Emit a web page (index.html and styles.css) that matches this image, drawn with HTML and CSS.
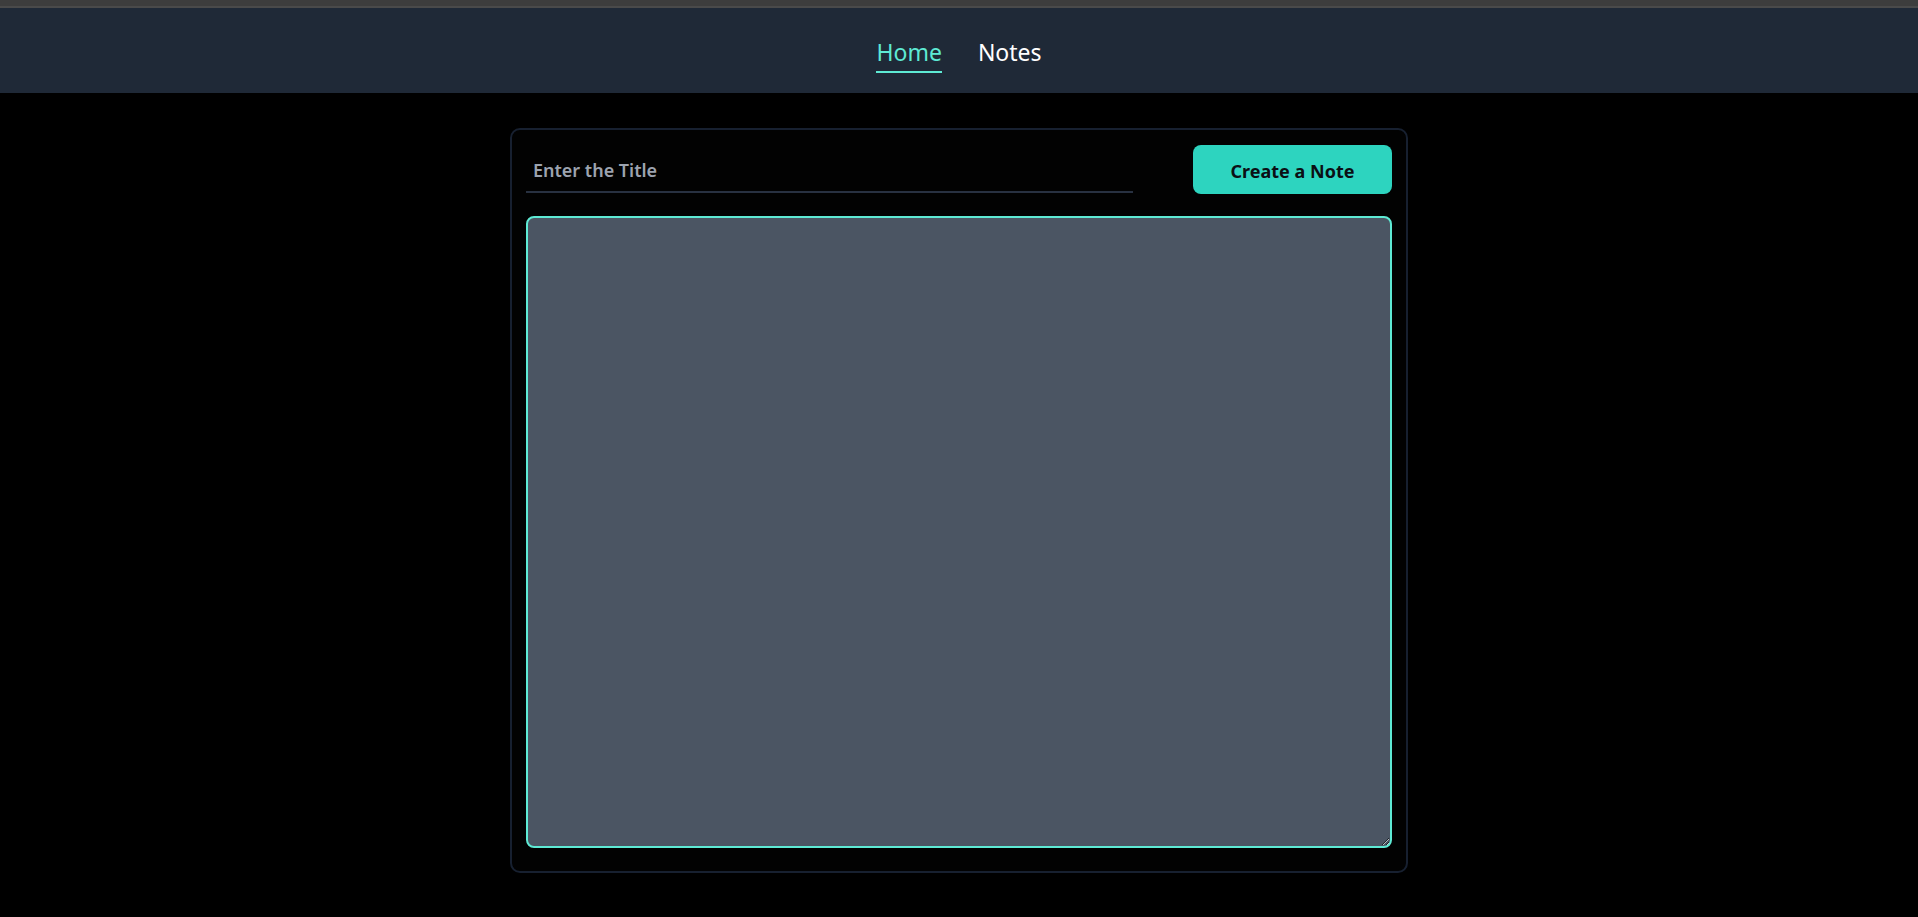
FILE: index.html
```html
<!DOCTYPE html>
<html lang="en">
<head>
<meta charset="utf-8">
<title>Notes</title>
<link rel="stylesheet" href="styles.css">
</head>
<body>
<div class="chrome"></div>
<nav class="nav">
  <a class="nav-link active" href="#">Home</a>
  <a class="nav-link" href="#">Notes</a>
</nav>
<main class="main">
  <section class="card">
    <div class="row">
      <input class="title-input" type="text" placeholder="Enter the Title">
      <button class="create-btn">Create a Note</button>
    </div>
    <textarea class="note-body"></textarea>
  </section>
</main>
</body>
</html>
```
FILE: styles.css
```css
* { box-sizing: border-box; }
html, body {
  margin: 0;
  background: #000;
  font-family: "Noto Sans", "Open Sans", "Liberation Sans", sans-serif;
}
.chrome {
  height: 8px;
  background: #3d3d3d;
  border-bottom: 2px solid #4a4a4a;
}
.nav {
  height: 85px;
  background: #1f2937;
  display: flex;
  justify-content: center;
  align-items: center;
  gap: 36px;
}
.nav-link {
  font-size: 23px;
  line-height: 30px;
  color: #ffffff;
  text-decoration: none;
  border-bottom: 2px solid transparent;
  padding-bottom: 4px;
  margin-top: 9px;
}
.nav-link.active {
  color: #5eead4;
  border-bottom-color: #5eead4;
}
.main {
  display: flex;
  justify-content: center;
  padding-top: 35px;
}
.card {
  width: 898px;
  height: 745px;
  border: 2px solid #172030;
  border-radius: 10px;
  background: #020202;
  padding: 15px 14px 23px 14px;
  display: flex;
  flex-direction: column;
}
.row {
  display: flex;
  justify-content: space-between;
  align-items: flex-start;
}
.title-input {
  width: 607px;
  height: 48px;
  background: transparent;
  border: none;
  border-bottom: 2px solid #283141;
  outline: none;
  padding: 4px 0 0 7px;
  font-family: inherit;
  font-size: 18px;
  font-weight: 600;
  color: #e5e7eb;
}
.title-input::placeholder {
  color: #9ca3af;
}
.create-btn {
  width: 199px;
  height: 49px;
  background: #2dd4bf;
  border: none;
  border-radius: 8px;
  font-family: inherit;
  font-size: 18px;
  font-weight: 700;
  color: #0b0f14;
  padding: 2px 0 0 0;
  cursor: pointer;
}
.note-body {
  display: block;
  margin-top: 22px;
  width: 100%;
  flex: 1;
  background: #4b5563;
  border: 2px solid #5eead4;
  border-radius: 8px;
  outline: none;
  color: #fff;
  font-family: inherit;
  font-size: 16px;
  padding: 8px;
}
```
